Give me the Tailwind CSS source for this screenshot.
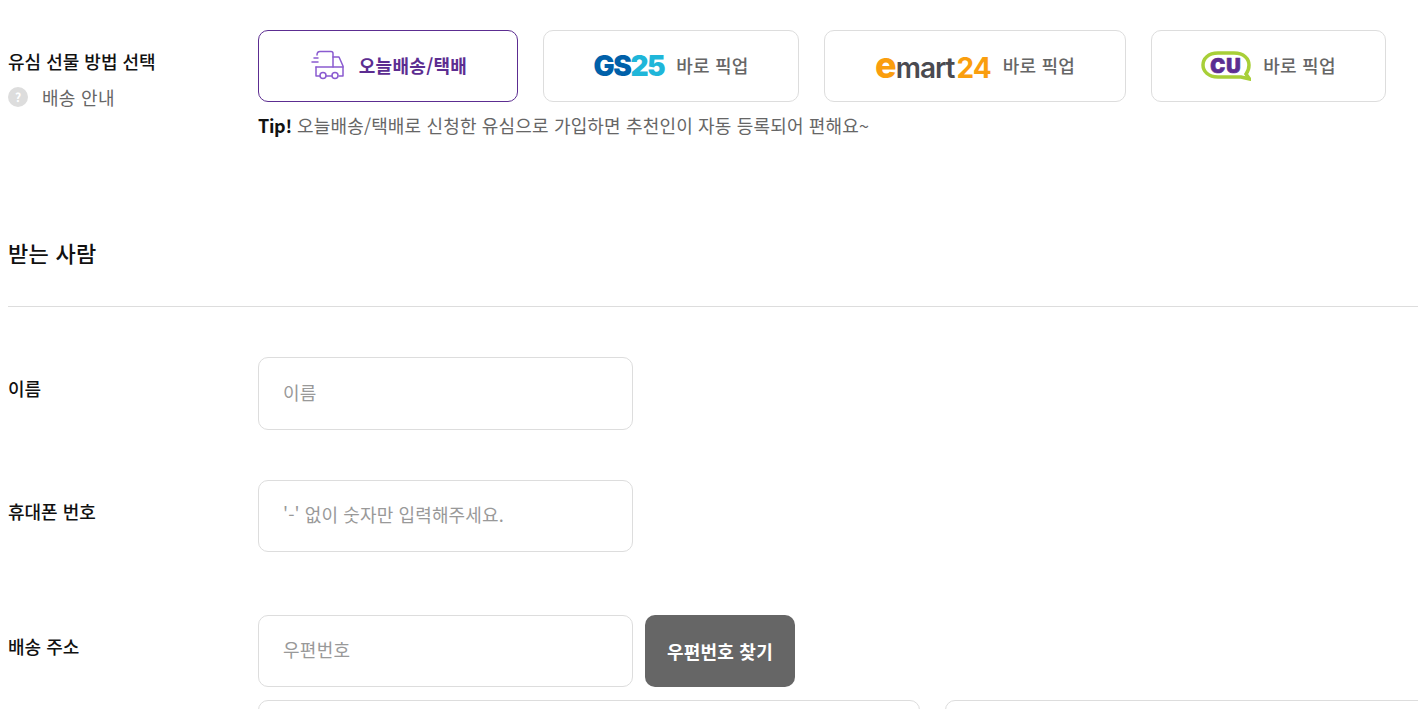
<!DOCTYPE html>
<html lang="ko">
<head>
  <meta charset="UTF-8" />
  <title>유심 선물 배송</title>
  <script src="https://cdn.jsdelivr.net/npm/@tailwindcss/browser@4"></script>
</head>
<body class="bg-white overflow-hidden h-[709px] font-['Noto_Sans_CJK_KR','Noto_Sans',sans-serif] text-[#111]">
  <main class="pl-2 pt-[30px] w-[1418px]">
    <!-- delivery method -->
    <section class="flex">
      <div class="w-[250px] shrink-0 pt-[18px]">
        <h3 class="text-[18px] leading-[26px] font-medium">유심 선물 방법 선택</h3>
        <a class="mt-[10px] flex items-center text-[18px] leading-[26px] text-[#666]">
          <span class="w-5 h-5 rounded-full bg-[#ddd] text-white text-[12px] leading-5 font-bold text-center">?</span>
          <span class="ml-[14px] tracking-[0.3px]">배송 안내</span>
        </a>
      </div>
      <div>
        <div class="flex gap-[25px]">
          <button class="w-[260px] h-[72px] pb-[2px] pl-[2px] flex items-center justify-center gap-[14px] rounded-[10px] border border-[#5c2d91] text-[18px] font-bold text-[#5c2d91] tracking-[0.3px]">
            <svg class="w-[34px] h-[30px]" viewBox="0 0 34 30" fill="none" stroke="#8a5bd0" stroke-width="1.500" stroke-linejoin="round" stroke-linecap="round">
              <path d="M6 5 Q6 1.500 9 1.500 H20 Q22 1.500 22 3.500 V17"/>
              <path d="M22 7 H28 L32 16 V26 H28"/>
              <path d="M5 17 H32"/>
              <path d="M5 17 V26 H9 M15 26 H21"/>
              <path d="M3 8 H7 M1 12 H7"/>
              <circle cx="12" cy="25.500" r="3"/>
              <circle cx="24" cy="25.500" r="3"/>
            </svg>
            오늘배송/택배
          </button>
          <button class="w-[256px] h-[72px] pb-[2px] flex items-center justify-center gap-3 rounded-[10px] border border-[#ddd] text-[18px] font-medium text-[#666] tracking-[0.2px]">
            <span class="mt-[2px] text-[28px] leading-none font-['Inter',sans-serif] font-black tracking-[-1.5px]"><span class="text-[#0060a9]">GS</span><span class="text-[#1fb6d9]">25</span></span>
            바로 픽업
          </button>
          <button class="w-[302px] h-[72px] pb-[2px] flex items-center justify-center gap-3 rounded-[10px] border border-[#ddd] text-[18px] font-medium text-[#666] tracking-[0.2px]">
            <span class="text-[28px] leading-none font-['Inter',sans-serif] font-semibold tracking-[-1px]"><span class="text-[#fa9e0e] font-extrabold text-[36px]">e</span><span class="text-[#4a4a50]">mart</span><span class="text-[#fa9e0e] font-bold ml-[2px]">24</span></span>
            바로 픽업
          </button>
          <button class="w-[235px] h-[72px] pb-[2px] flex items-center justify-center gap-3 rounded-[10px] border border-[#ddd] text-[18px] font-medium text-[#666] tracking-[0.2px]">
            <svg class="w-[50px] h-[30px] mt-[2px]" viewBox="0 0 50 30">
              <path d="M17 2 H33 C43 2 48 8 48 14 C48 18 47 20.500 45 23 L48.500 28 L40 26 H17 C7 26 2 20 2 14 C2 8 7 2 17 2 Z" fill="none" stroke="#a8cf38" stroke-width="3.500"/>
              <text x="25" y="21.500" text-anchor="middle" letter-spacing="1" font-family="Inter, sans-serif" font-size="20" font-weight="900" fill="#5c2d91" stroke="#5c2d91" stroke-width="0.7" stroke-linejoin="round">CU</text>
            </svg>
            바로 픽업
          </button>
        </div>
        <p class="mt-[10px] text-[18px] leading-[27px] text-[#666] tracking-[0.16px]"><b class="text-[#111] font-bold tracking-[-0.3px]">Tip!</b> 오늘배송/택배로 신청한 유심으로 가입하면 추천인이 자동 등록되어 편해요~</p>
      </div>
    </section>

    <!-- recipient -->
    <h2 class="mt-[97px] text-[22px] leading-[32px] font-medium tracking-[0.3px]">받는 사람</h2>
    <hr class="mt-[38px] border-[#ddd]" />

    <section class="mt-[50px] flex">
      <label class="w-[250px] shrink-0 pt-[18px] text-[18px] leading-[26px] font-medium">이름</label>
      <input class="w-[375px] h-[73px] px-6 pb-1 rounded-[10px] border border-[#ddd] text-[18px] tracking-[0.3px] placeholder:text-[#999]" placeholder="이름" />
    </section>
    <section class="mt-[50px] flex">
      <label class="w-[250px] shrink-0 pt-[18px] text-[18px] leading-[26px] font-medium">휴대폰 번호</label>
      <input class="w-[375px] h-[72px] px-6 pb-1 rounded-[10px] border border-[#ddd] text-[18px] tracking-[0.12px] placeholder:text-[#999]" placeholder="'-' 없이 숫자만 입력해주세요." />
    </section>
    <section class="mt-[63px] flex">
      <label class="w-[250px] shrink-0 pt-[18px] text-[18px] leading-[26px] font-medium">배송 주소</label>
      <div>
        <div class="flex gap-3">
          <input class="w-[375px] h-[72px] px-6 pb-1 rounded-[10px] border border-[#ddd] text-[18px] tracking-[0.3px] placeholder:text-[#999]" placeholder="우편번호" />
          <button class="w-[150px] h-[72px] rounded-[10px] bg-[#666] text-white text-[18px] font-bold tracking-[0.2px]">우편번호 찾기</button>
        </div>
        <div class="mt-[13px] flex gap-[25px]">
          <input class="w-[662px] h-[72px] shrink-0 rounded-[10px] border border-[#ddd]" />
          <input class="w-[500px] h-[72px] shrink-0 rounded-[10px] border border-[#ddd]" />
        </div>
      </div>
    </section>
  </main>
</body>
</html>
